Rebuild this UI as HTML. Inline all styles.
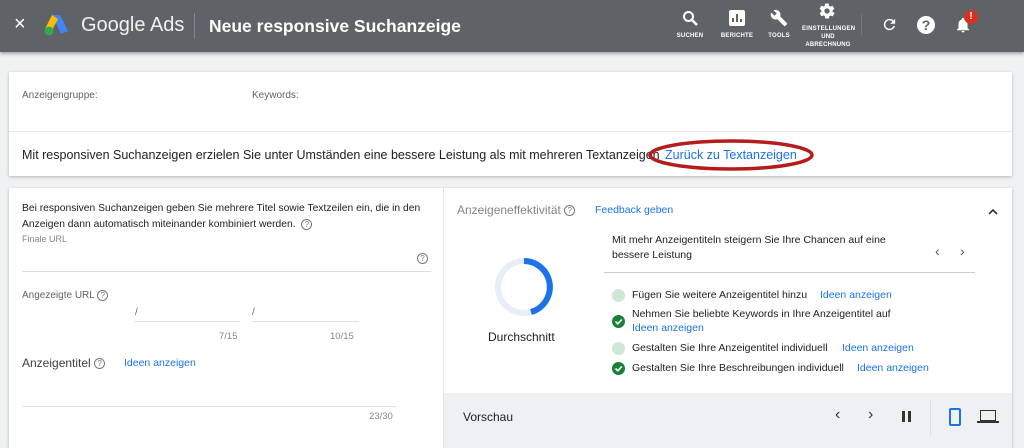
<!DOCTYPE html>
<html><head><meta charset="utf-8"><style>
*{margin:0;padding:0;box-sizing:border-box}
body{width:1024px;height:443px;overflow:hidden;background:#eff1f3;font-family:"Liberation Sans",Arial,sans-serif;position:relative;color:#202124}
.a{position:absolute;white-space:nowrap}
.hdr{position:absolute;left:0;top:0;width:1024px;height:52px;background:#5f6368;box-shadow:0 2px 3px rgba(0,0,0,.3)}
.w{color:#fff}
.ic{position:absolute;color:#fff;font-size:6px;font-weight:bold;text-align:center;letter-spacing:.2px}
.card{position:absolute;background:#fff;box-shadow:0 1px 3px rgba(0,0,0,.25)}
.blue{color:#1a73e8}
.q{display:inline-block;width:11px;height:11px;border:1.3px solid #777;border-radius:50%;font-size:8px;line-height:9px;text-align:center;color:#777;vertical-align:middle}
.dot{position:absolute;width:13px;height:13px;border-radius:50%;background:#cde8d6}
.chk{position:absolute;width:13px;height:13px;border-radius:50%;background:#188038}
</style></head><body>
<div class="hdr">
<div class="a w" style="left:14px;top:13px;font-size:20px">×</div>
<svg class="a" style="left:43px;top:13px" width="26" height="24" viewBox="0 0 26 24"><path d="M9 2 L17 2 L25 18 L18 21 Z" fill="#4285f4"/><path d="M9 2 L15 6 L8 19 L2 16 Z" fill="#fbbc04"/><circle cx="6" cy="18" r="4.5" fill="#34a853"/></svg>
<div class="a w" style="left:81px;top:14px;font-size:20px;color:#f1f1f1">Google Ads</div>
<div class="a" style="left:194px;top:13px;width:1px;height:26px;background:#80868b"></div>
<div class="a w" style="left:209px;top:16px;font-size:17.5px;font-weight:bold">Neue responsive Suchanzeige</div>
<svg class="a" style="left:682px;top:10px" width="16" height="16" viewBox="0 0 16 16"><circle cx="6.5" cy="6.5" r="4.5" stroke="#fff" stroke-width="2" fill="none"/><path d="M10 10 L15 15" stroke="#fff" stroke-width="2.4"/></svg>
<div class="ic" style="left:672px;top:33px;width:36px">SUCHEN</div>
<svg class="a" style="left:729px;top:10px" width="16" height="16" viewBox="0 0 16 16"><rect x="0" y="0" width="16" height="16" rx="2" fill="#fff"/><path d="M4 12V8M8 12V4M12 12V9" stroke="#5f6368" stroke-width="2"/></svg>
<div class="ic" style="left:717px;top:33px;width:40px">BERICHTE</div>
<svg class="a" style="left:770px;top:9px" width="18" height="18" viewBox="0 0 24 24"><path d="M22.7 19l-9.1-9.1c.9-2.3.4-5-1.5-6.9-2-2-5-2.4-7.4-1.3L9 6 6 9 1.6 4.7C.4 7.1.9 10.1 2.9 12.1c1.9 1.9 4.6 2.4 6.9 1.5l9.1 9.1c.4.4 1 .4 1.4 0l2.3-2.3c.5-.4.5-1.1.1-1.4z" fill="#fff"/></svg>
<div class="ic" style="left:762px;top:33px;width:34px">TOOLS</div>
<svg class="a" style="left:818px;top:2px" width="18" height="18" viewBox="0 0 24 24"><path d="M19.4 13c0-.3.1-.7.1-1s0-.7-.1-1l2.1-1.6c.2-.2.2-.4.1-.6l-2-3.5c-.1-.2-.4-.3-.6-.2l-2.5 1c-.5-.4-1.1-.7-1.7-1l-.4-2.6C14.5 2.2 14.2 2 14 2h-4c-.2 0-.5.2-.5.4l-.4 2.6c-.6.3-1.2.6-1.7 1l-2.5-1c-.2-.1-.5 0-.6.2l-2 3.5c-.1.2-.1.4.1.6L4.6 11c0 .3-.1.7-.1 1s0 .7.1 1l-2.1 1.6c-.2.2-.2.4-.1.6l2 3.5c.1.2.4.3.6.2l2.5-1c.5.4 1.1.7 1.7 1l.4 2.6c0 .3.3.5.5.5h4c.2 0 .5-.2.5-.4l.4-2.6c.6-.3 1.2-.6 1.7-1l2.5 1c.2.1.5 0 .6-.2l2-3.5c.1-.2.1-.5-.1-.6L19.4 13zM12 15.5c-1.9 0-3.5-1.6-3.5-3.5s1.6-3.5 3.5-3.5 3.5 1.6 3.5 3.5-1.6 3.5-3.5 3.5z" fill="#fff"/></svg>
<div class="ic" style="left:802px;top:25px;width:52px;line-height:8px">EINSTELLUNGEN<br>UND<br>ABRECHNUNG</div>
<div class="a" style="left:861px;top:14px;width:1px;height:22px;background:#777"></div>
<svg class="a" style="left:881px;top:16px" width="17" height="17" viewBox="0 0 24 24"><path d="M17.65 6.35A7.96 7.96 0 0 0 12 4a8 8 0 1 0 7.73 10h-2.08A6 6 0 1 1 12 6c1.66 0 3.14.69 4.22 1.78L13 11h7V4l-2.35 2.35z" fill="#fff"/></svg>
<div class="a" style="left:917px;top:16px;width:18px;height:18px;border-radius:50%;background:#fff;color:#5f6368;font-weight:bold;font-size:14px;text-align:center;line-height:18px">?</div>
<svg class="a" style="left:954px;top:15px" width="18" height="20" viewBox="0 0 24 24"><path d="M12 22c1.1 0 2-.9 2-2h-4c0 1.1.9 2 2 2zm6-6v-5c0-3.1-1.6-5.6-4.5-6.3V4c0-.8-.7-1.5-1.5-1.5s-1.5.7-1.5 1.5v.7C7.6 5.4 6 7.9 6 11v5l-2 2v1h16v-1l-2-2z" fill="#fff"/></svg>
<div class="a" style="left:964px;top:10px;width:14px;height:14px;border-radius:50%;background:#d93025;color:#fff;font-size:10px;font-weight:bold;text-align:center;line-height:14px">!</div>
</div>

<div class="card" style="left:9px;top:72px;width:1003px;height:104px">
<div class="a" style="left:13px;top:18px;font-size:10px;color:#5f6368">Anzeigengruppe:</div>
<div class="a" style="left:243px;top:18px;font-size:10px;color:#5f6368">Keywords:</div>
<div class="a" style="left:0;top:59px;width:1003px;height:1px;background:#e8eaed"></div>
<div class="a" style="left:13px;top:76px;font-size:12.5px">Mit responsiven Suchanzeigen erzielen Sie unter Umständen eine bessere Leistung als mit mehreren Textanzeigen</div>
<div class="a blue" style="left:656px;top:76px;font-size:12.5px">Zurück zu Textanzeigen</div>
</div>
<svg class="a" style="left:645px;top:136px" width="172" height="38"><ellipse cx="86" cy="19" rx="81" ry="14" fill="none" stroke="#b51d1d" stroke-width="3.5"/></svg>

<div class="card" style="left:9px;top:188px;width:1003px;height:260px">
<div class="a" style="left:13px;top:13px;font-size:10.3px;line-height:16px;white-space:normal;width:405px">Bei responsiven Suchanzeigen geben Sie mehrere Titel sowie Textzeilen ein, die in den Anzeigen dann automatisch miteinander kombiniert werden. &nbsp;<span class="q">?</span></div>
<div class="a" style="left:13px;top:46px;font-size:9px;color:#80868b">Finale URL</div>
<div class="a" style="left:408px;top:62px"><span class="q">?</span></div>
<div class="a" style="left:13px;top:83px;width:409px;height:1px;background:#dadce0"></div>
<div class="a" style="left:13px;top:102px;font-size:10px;color:#5f6368">Angezeigte URL <span class="q">?</span></div>
<div class="a" style="left:126px;top:119px;font-size:10px;color:#5f6368">/</div>
<div class="a" style="left:243px;top:119px;font-size:10px;color:#5f6368">/</div>
<div class="a" style="left:125px;top:133px;width:106px;height:1px;background:#e0e0e0"></div>
<div class="a" style="left:243px;top:133px;width:107px;height:1px;background:#e0e0e0"></div>
<div class="a" style="left:210px;top:143px;font-size:9.5px;color:#80868b">7/15</div>
<div class="a" style="left:321px;top:143px;font-size:9.5px;color:#80868b">10/15</div>
<div class="a" style="left:13px;top:168px;font-size:12px;color:#3c4043">Anzeigentitel <span class="q">?</span></div>
<div class="a blue" style="left:115px;top:169px;font-size:10.5px">Ideen anzeigen</div>
<div class="a" style="left:13px;top:218px;width:374px;height:1px;background:#e0e0e0"></div>
<div class="a" style="left:360px;top:223px;font-size:9.5px;color:#80868b">23/30</div>
<div class="a" style="left:434px;top:0;width:1px;height:260px;background:#e3e3e3"></div>
<div class="a" style="left:435px;top:205px;width:568px;height:55px;background:#eef0f4"></div>
</div>

<div class="a" style="left:457px;top:203px;font-size:12px;color:#80868b">Anzeigeneffektivität <span class="q">?</span></div>
<div class="a blue" style="left:595px;top:204px;font-size:10.5px">Feedback geben</div>
<svg class="a" style="left:987px;top:207px" width="12" height="10"><path d="M2 7 L6 3 L10 7" stroke="#333" stroke-width="1.6" fill="none"/></svg>
<svg class="a" style="left:491px;top:254px" width="66" height="66" viewBox="0 0 66 66"><circle cx="33" cy="33" r="26" stroke="#e8eef8" stroke-width="6" fill="none"/><path d="M33 7 A26 26 0 0 1 40 58" stroke="#1a73e8" stroke-width="6" fill="none"/></svg>
<div class="a" style="left:488px;top:330px;font-size:12px">Durchschnitt</div>
<div class="a" style="left:612px;top:233px;font-size:10.5px;line-height:15px">Mit mehr Anzeigentiteln steigern Sie Ihre Chancen auf eine<br>bessere Leistung</div>
<div class="a" style="left:935px;top:243px;font-size:14px;color:#555">‹</div>
<div class="a" style="left:960px;top:243px;font-size:14px;color:#555">›</div>
<div class="a" style="left:604px;top:272px;width:371px;height:1px;background:#ccc"></div>
<div class="dot" style="left:612px;top:289px"></div>
<div class="a" style="left:632px;top:289px;font-size:10.5px">Fügen Sie weitere Anzeigentitel hinzu</div>
<div class="a blue" style="left:820px;top:289px;font-size:10.5px">Ideen anzeigen</div>
<div class="chk" style="left:612px;top:315px"></div>
<svg class="a" style="left:612px;top:315px" width="13" height="13"><path d="M3.5 6.5 L5.8 8.8 L9.8 4.5" stroke="#fff" stroke-width="1.6" fill="none"/></svg>
<div class="a" style="left:632px;top:308px;font-size:10.5px">Nehmen Sie beliebte Keywords in Ihre Anzeigentitel auf</div>
<div class="a blue" style="left:632px;top:322px;font-size:10.5px">Ideen anzeigen</div>
<div class="dot" style="left:612px;top:342px"></div>
<div class="a" style="left:632px;top:342px;font-size:10.5px">Gestalten Sie Ihre Anzeigentitel individuell</div>
<div class="a blue" style="left:842px;top:342px;font-size:10.5px">Ideen anzeigen</div>
<div class="chk" style="left:612px;top:362px"></div>
<svg class="a" style="left:612px;top:362px" width="13" height="13"><path d="M3.5 6.5 L5.8 8.8 L9.8 4.5" stroke="#fff" stroke-width="1.6" fill="none"/></svg>
<div class="a" style="left:632px;top:362px;font-size:10.5px">Gestalten Sie Ihre Beschreibungen individuell</div>
<div class="a blue" style="left:857px;top:362px;font-size:10.5px">Ideen anzeigen</div>

<div class="a" style="left:463px;top:410px;font-size:12px">Vorschau</div>
<div class="a" style="left:835px;top:406px;font-size:16px;color:#333">‹</div>
<div class="a" style="left:868px;top:406px;font-size:16px;color:#333">›</div>
<div class="a" style="left:902px;top:411px;width:3px;height:11px;background:#333"></div>
<div class="a" style="left:908px;top:411px;width:3px;height:11px;background:#333"></div>
<div class="a" style="left:930px;top:400px;width:1px;height:36px;background:#dde"></div>
<div class="a" style="left:949px;top:408px;width:12px;height:18px;border:2px solid #1a73e8;border-radius:2px"></div>
<div class="a" style="left:980px;top:410px;width:16px;height:11px;border:1.6px solid #333"></div>
<div class="a" style="left:977px;top:421px;width:22px;height:2px;background:#333"></div>
</body></html>
